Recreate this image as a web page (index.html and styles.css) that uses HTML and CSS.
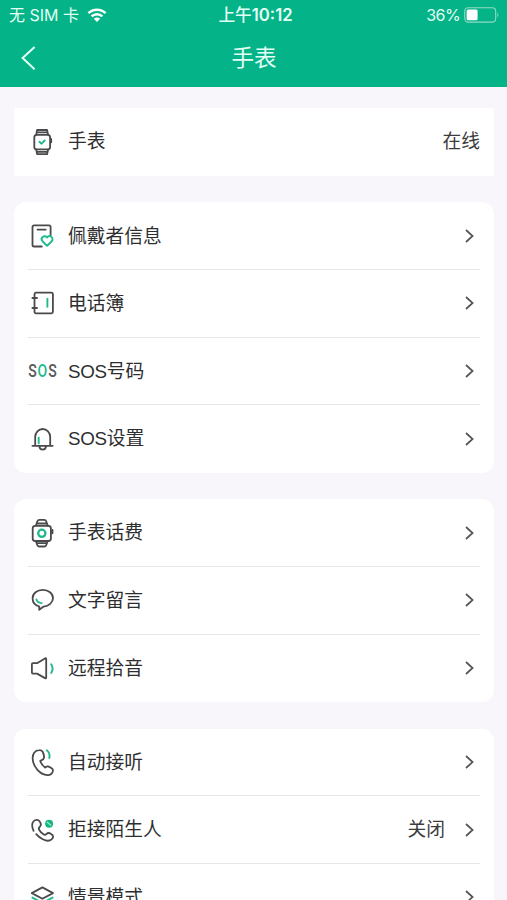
FILE: index.html
```html
<!DOCTYPE html>
<html lang="zh-CN">
<head>
    <meta charset="UTF-8">
    <meta name="viewport" content="width=device-width, initial-scale=1.0">
    <title>手表</title>
    <link rel="stylesheet" href="styles.css">
</head>
<body>
    <header class="header">
        <div class="status-bar">
            <div class="carrier">
                <span class="carrier-name">无 SIM 卡</span>
                <svg class="wifi" width="20" height="15" viewBox="0 0 20 15">
                    <path d="M1.4 5.2A12.3 12.3 0 0 1 18.6 5.2M4.6 8.4A7.8 7.8 0 0 1 15.4 8.4" fill="none" stroke="currentColor" stroke-width="2.5"/>
                    <path d="M6.8 10.8A4.6 4.6 0 0 1 13.2 10.8L10 14Z" fill="currentColor"/>
                </svg>
            </div>
            <div class="clock">上午<b>10:12</b></div>
            <div class="battery">
                <span>36%</span>
                <svg width="36" height="16" viewBox="0 0 36 16">
                    <rect x="0.7" y="0.7" width="31" height="14.4" rx="3.5" fill="none" stroke="#8fdcc5" stroke-width="1.1"/>
                    <rect x="2.6" y="2.6" width="11" height="10.6" rx="1.5" fill="#fff"/>
                    <path d="M33.4 5.4q2 2.5 0 5z" fill="#8fdcc5"/>
                </svg>
            </div>
        </div>
        <div class="nav-bar">
            <svg class="back" width="16" height="24" viewBox="0 0 16 24">
                <path d="M13.6 1L1.6 12.1L13.6 23.2"/>
            </svg>
            <h1>手表</h1>
        </div>
    </header>

    <main class="content">
        <section class="card device">
            <div class="row">
                <svg class="icon" viewBox="0 0 30 30">
                    <rect x="7.3" y="7.8" width="15.8" height="14.6" rx="2.5"/>
                    <path d="M9.3 7.5L10.1 3h10L21 7.5M9.3 22.7L10.1 27.2h10l.9-4.5M9.8 5.3h10.6M9.8 24.9h10.6"/>
                    <path class="thick" d="M24 12v3.2"/>
                    <path class="green" d="M12.4 14.8l2.1 1.9 3.2-3.2"/>
                </svg>
                <span class="label">手表</span>
                <span class="value">在线</span>
            </div>
        </section>

        <section class="card">
            <div class="row">
                <svg class="icon" viewBox="0 0 30 30">
                    <path d="M23.6 14V6a1.6 1.6 0 0 0-1.6-1.6H7.1A1.6 1.6 0 0 0 5.5 6v17.9a1.6 1.6 0 0 0 1.6 1.6h7.7M10.5 8.6h8.2"/>
                    <path class="green" d="M20.1 24.8L15.3 20a3 3 0 0 1 4.8-3.6A3 3 0 0 1 24.9 20Z"/>
                </svg>
                <span class="label">佩戴者信息</span>
                <svg class="arrow" viewBox="0 0 9 14"><path d="M1 1l6.6 6L1 13"/></svg>
            </div>
            <div class="row">
                <svg class="icon" viewBox="0 0 30 30">
                    <rect x="7.5" y="4.7" width="18.4" height="20.6" rx="1.5"/>
                    <path d="M5.4 10h4.6M5.4 20h4.6"/>
                    <path class="green" d="M20.4 10.8v8"/>
                </svg>
                <span class="label">电话簿</span>
                <svg class="arrow" viewBox="0 0 9 14"><path d="M1 1l6.6 6L1 13"/></svg>
            </div>
            <div class="row">
                <div class="icon sos"><span class="sos-text">S<b>O</b>S</span></div>
                <span class="label"><span class="latin">SOS</span>号码</span>
                <svg class="arrow" viewBox="0 0 9 14"><path d="M1 1l6.6 6L1 13"/></svg>
            </div>
            <div class="row">
                <svg class="icon" viewBox="0 0 30 30">
                    <path d="M8.2 21.6V13a7.4 7.9 0 0 1 15 0v8.6M5.4 21.8h20.3M12.3 22.2c.4 4.6 6.4 4.6 6.8 0"/>
                    <path class="green" d="M11.7 13.6v5.6"/>
                </svg>
                <span class="label"><span class="latin">SOS</span>设置</span>
                <svg class="arrow" viewBox="0 0 9 14"><path d="M1 1l6.6 6L1 13"/></svg>
            </div>
        </section>

        <section class="card">
            <div class="row">
                <svg class="icon" viewBox="0 0 30 30">
                    <rect x="5.7" y="7.8" width="18.2" height="15.2" rx="2.5"/>
                    <path d="M8.9 7.6l1.5-4.4q.5-1.3 1.9-1.3h5q1.4 0 1.9 1.3l1.5 4.4M8.9 23.2l1.5 4q.5 1.3 1.9 1.3h5q1.4 0 1.9-1.3l1.5-4M10.3 5.5h9M10.3 25.2h9"/>
                    <path class="thick" d="M25.3 12.2v3"/>
                    <circle class="green ring" cx="14.8" cy="15.3" r="3.6"/>
                </svg>
                <span class="label">手表话费</span>
                <svg class="arrow" viewBox="0 0 9 14"><path d="M1 1l6.6 6L1 13"/></svg>
            </div>
            <div class="row">
                <svg class="icon" viewBox="0 0 30 30">
                    <path d="M12.3 21.5C8.3 20.4 5.6 17.1 5.6 13.2C5.6 8.5 10.1 4.8 15.8 4.8S26 8.4 26 13.1C26 17.7 21.7 21 16.7 21.6L12.2 24.7Z"/>
                    <path class="green" d="M9.4 14.5c.7 2.1 2.6 3.4 5.2 3.6"/>
                </svg>
                <span class="label">文字留言</span>
                <svg class="arrow" viewBox="0 0 9 14"><path d="M1 1l6.6 6L1 13"/></svg>
            </div>
            <div class="row">
                <svg class="icon" viewBox="0 0 30 30">
                    <path d="M4.9 11.2q0-1 1-1H10L18 5.4q1.2-.6 1.2.7v18.3q0 1.3-1.2.7L10 20.6H5.9q-1 0-1-1Z"/>
                    <path class="green" d="M24.2 11.2q2.8 4.4 0 8.8"/>
                </svg>
                <span class="label">远程拾音</span>
                <svg class="arrow" viewBox="0 0 9 14"><path d="M1 1l6.6 6L1 13"/></svg>
            </div>
        </section>

        <section class="card">
            <div class="row">
                <svg class="icon" viewBox="0 0 30 30">
                    <path d="M12.3 3.1C7.8 3.2 5.3 7.2 5.7 12C6.3 20.2 12.8 27.5 20.5 28.2C23.3 28.4 25.7 26.3 25.9 23.7C26.1 22.5 25.4 21.6 24.3 21L21.7 19.6C20.4 18.9 19.2 19.7 18.1 20.6C15.8 18.9 14 16.5 13.3 13.9C14.8 13.2 16.8 12.5 17 10.8C17.2 9 16.6 6.4 15.5 4.5C14.8 3.4 13.7 3 12.3 3.1Z"/>
                    <path class="green" d="M19.8 3.2c2.4 1.8 3.2 4.5 2.5 7.8"/>
                </svg>
                <span class="label">自动接听</span>
                <svg class="arrow" viewBox="0 0 9 14"><path d="M1 1l6.6 6L1 13"/></svg>
            </div>
            <div class="row">
                <svg class="icon" viewBox="0 0 30 30">
                    <path d="M6.6 15.8C5 12.4 4.5 8.8 6.4 6.5C8.4 4.3 11.4 4.4 12.7 6.4C14.5 9 14.1 10.5 12.8 11.7C11.6 12.7 11.4 13.6 12.3 15C13.4 17 15 18.6 17 19.6C18 20.2 18.8 19.7 19.6 18.8C20.7 17.7 22.2 17.7 24.2 19C26.8 20.6 26.6 22.5 24.6 24.4C22.6 26.1 19.2 26 15.8 24.3C13.2 23 11 21.3 9.2 19.2"/>
                    <circle class="dot" cx="22.1" cy="8.7" r="4"/>
                    <path class="slash" d="M20.2 7.2l3.7 3"/>
                </svg>
                <span class="label">拒接陌生人</span>
                <span class="value">关闭</span>
                <svg class="arrow" viewBox="0 0 9 14"><path d="M1 1l6.6 6L1 13"/></svg>
            </div>
            <div class="row">
                <svg class="icon" viewBox="0 0 30 30">
                    <path d="M15.4 5.4L26 11.1L15.4 16.8L4.8 11.1Z"/>
                    <path class="green" d="M5.4 15.6l10 5.3 10.2-5.3"/>
                    <path d="M5 20l10.4 5.5L26 20"/>
                </svg>
                <span class="label">情景模式</span>
                <svg class="arrow" viewBox="0 0 9 14"><path d="M1 1l6.6 6L1 13"/></svg>
            </div>
        </section>
    </main>
</body>
</html>
```
FILE: styles.css
```css
* {
    box-sizing: border-box;
}
html, body {
    height: 900px;
    overflow: hidden;
}
body {
    margin: 0;
    background-color: #f8f6fb;
    color: #2e2e30;
    font-family: "Liberation Sans", "Noto Sans CJK SC", sans-serif;
}

/* header */
.header {
    height: 87px;
    background-color: #04b387;
    color: #e3fff5;
}
.status-bar {
    display: grid;
    grid-template-columns: 1fr auto 1fr;
    align-items: center;
    height: 30px;
    padding: 0 7px 0 9px;
    font-family: Inter, "Noto Sans CJK SC", sans-serif;
    font-size: 16px;
    line-height: 30px;
}
.carrier, .battery {
    display: flex;
    align-items: center;
}
.carrier {
    gap: 8px;
}
.wifi {
    color: #fff;
}
.clock {
    padding-left: 2px;
    font-size: 16.7px;
    font-weight: 500;
}
.clock b {
    font-weight: 600;
}
.battery {
    justify-content: flex-end;
    gap: 4px;
    letter-spacing: -0.6px;
}
.nav-bar {
    display: grid;
    grid-template-columns: 1fr auto 1fr;
    align-items: center;
    height: 56px;
    padding: 0 20px 0 21px;
}
.back {
    fill: none;
    stroke: #e3fff5;
    stroke-width: 2;
}
h1 {
    margin: 0;
    padding-top: 2px;
    font-size: 22.5px;
    font-weight: 400;
    line-height: 30px;
}

/* list */
.content {
    display: flex;
    flex-direction: column;
    gap: 26.5px;
    padding: 21.4px 13px 0 14px;
}
.card {
    background-color: #fff;
    border-radius: 12px;
    padding: 0 14px;
}
.device {
    border-radius: 2px;
}
.row {
    display: flex;
    align-items: center;
    height: 67.6px;
    border-bottom: 1.5px solid #e7e7e9;
    font-size: 18.75px;
    line-height: 28px;
}
.row:last-child {
    border-bottom-color: transparent;
}
.label {
    flex: 1;
    margin-left: 11px;
    padding-top: 1.6px;
}
.latin {
    letter-spacing: -0.3px;
}
.value {
    padding-top: 1.6px;
    color: #3c3c3e;
}

/* icons */
.icon {
    width: 30px;
    height: 30px;
    margin-left: -1px;
    flex: none;
    fill: none;
    stroke: #4a4a4c;
    stroke-width: 1.8;
    stroke-linejoin: round;
    stroke-linecap: round;
}
.icon .green {
    stroke: #1fb98d;
    stroke-width: 1.9;
}
.icon .ring {
    stroke-width: 2.3;
}
.icon .thick {
    stroke-width: 2.2;
}
.icon .dot {
    fill: #14b585;
    stroke: none;
}
.icon .slash {
    stroke: #a5e6d1;
    stroke-width: 1.2;
}
.sos {
    display: flex;
    justify-content: center;
    align-items: center;
}
.sos-text {
    color: #58585a;
    font-family: Roboto, sans-serif;
    font-size: 19px;
    font-weight: 500;
    letter-spacing: 1.2px;
    margin-right: -1.2px;
    transform: scaleX(0.74);
}
.sos-text b {
    color: #1fb98d;
    font-weight: 500;
}
.arrow {
    width: 9px;
    height: 14px;
    margin: 0 6px 0 20px;
    fill: none;
    stroke: #555;
    stroke-width: 1.7;
}
```
